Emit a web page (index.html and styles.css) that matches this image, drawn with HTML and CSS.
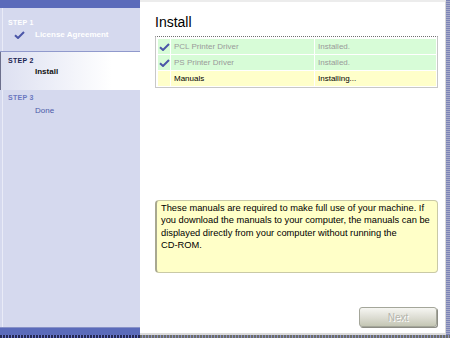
FILE: index.html
```html
<!DOCTYPE html>
<html lang="en">
<head>
  <meta charset="UTF-8">
  <title>Setup - Install</title>
  <link rel="stylesheet" href="styles.css">
</head>
<body>
  <div class="window">
    <div class="frame">
      <aside class="sidebar">
        <div class="sidebar-top"></div>

        <div class="step step-done">
          <div class="step-label">STEP 1</div>
          <div class="step-name">
            <svg class="check" width="11" height="8" viewBox="0 0 11 8"><path d="M1 4.2 L4 7 L10 1" fill="none" stroke="currentColor" stroke-width="2"/></svg>
            License Agreement
          </div>
        </div>

        <div class="step step-current">
          <div class="step-label">STEP 2</div>
          <div class="step-name">Install</div>
        </div>

        <div class="step step-next">
          <div class="step-label">STEP 3</div>
          <div class="step-name">Done</div>
        </div>

        <div class="sidebar-bottom"></div>
      </aside>

      <main class="content">
        <h1 class="title">Install</h1>

        <table class="progress">
          <tr class="row-ok">
            <td class="cell-icon"><svg class="check" width="11" height="8" viewBox="0 0 11 8"><path d="M1 4.2 L4 7 L10 1" fill="none" stroke="currentColor" stroke-width="2"/></svg></td>
            <td class="cell-name">PCL Printer Driver</td>
            <td class="cell-status">Installed.</td>
          </tr>
          <tr class="row-ok">
            <td class="cell-icon"><svg class="check" width="11" height="8" viewBox="0 0 11 8"><path d="M1 4.2 L4 7 L10 1" fill="none" stroke="currentColor" stroke-width="2"/></svg></td>
            <td class="cell-name">PS Printer Driver</td>
            <td class="cell-status">Installed.</td>
          </tr>
          <tr class="row-busy">
            <td class="cell-icon"></td>
            <td class="cell-name">Manuals</td>
            <td class="cell-status">Installing...</td>
          </tr>
        </table>

        <div class="note">
          These manuals are required to make full use of your machine. If you download the manuals to your computer, the manuals can be displayed directly from your computer without running the <span class="nowrap">CD-ROM.</span>
        </div>

        <div class="actions">
          <button class="next-btn" disabled>Next</button>
        </div>
      </main>

      <div class="edge"></div>
    </div>

    <div class="bottom-strip">
      <div class="strip-left"></div>
      <div class="strip-right"></div>
    </div>
  </div>
</body>
</html>
```

FILE: styles.css
```css
:root {
  --bar-blue: #5b6bba;
  --side-bg: #d5d9ee;
  --check: #4b56a8;
  --ok-bg: #d7fcd7;
  --busy-bg: #ffffca;
}

body {
  margin: 0;
  font-family: "Liberation Sans", Arial, sans-serif;
  background: #fff;
}

.window {
  width: 450px;
  height: 338px;
  display: flex;
  flex-direction: column;
}

.frame {
  display: flex;
  height: 335px;
}

/* left step list */
.sidebar {
  width: 140px;
  display: flex;
  flex-direction: column;
  background-color: var(--side-bg);
  background-image: linear-gradient(to right, transparent 2px, #e9ebf7 2px, #e9ebf7 3px, transparent 3px);
}

.sidebar-top {
  height: 8px;
  background: var(--bar-blue);
}

.sidebar-bottom {
  height: 7px;
  background: var(--bar-blue);
  border-top: 1px solid #8892c8;
}

.step {
  box-sizing: border-box;
}

.step-label {
  font-size: 7px;
  font-weight: bold;
  line-height: 9px;
  padding-left: 8px;
  letter-spacing: 0.3px;
}

.step-name {
  position: relative;
  font-size: 8px;
  line-height: 10px;
  padding-left: 35px;
}

.step-name .check {
  position: absolute;
  left: 14px;
  top: 1px;
}

.step-done {
  height: 44px;
  padding-top: 10px;
  border-bottom: 1px solid #9099cc;
  color: #ffffff;
}

.step-done .step-name {
  margin-top: 3px;
  font-weight: bold;
}

.step-done .check {
  color: var(--check);
}

.step-current {
  height: 38px;
  padding-top: 4px;
  background: linear-gradient(to right, #dde0f1, #ffffff 80%);
  border-left: 1px solid #6c6f8c;
}

.step-current .step-label {
  color: #1c2552;
  padding-left: 7px;
}

.step-current .step-name {
  margin-top: 2px;
  color: #111;
  font-weight: bold;
  padding-left: 34px;
}

.step-next {
  flex: 1;
  padding-top: 3px;
}

.step-next .step-label {
  color: #6a77c0;
}

.step-next .step-name {
  margin-top: 4px;
  color: #4c59a8;
}

/* right content */
.content {
  flex: 1;
  display: flex;
  flex-direction: column;
  padding: 0 7px 6px 15px;
  border-top: 2px solid #ececec;
  border-bottom: 2px solid #dcdcdc;
  border-right: 1px solid #d8d8d8;
}

.title {
  margin: 12px 0 0;
  font-size: 14px;
  font-weight: normal;
  line-height: 16px;
  color: #000;
}

.progress {
  margin-top: 6px;
  width: 283px;
  border-collapse: separate;
  border-spacing: 1px;
  padding: 1px 0 0 1px;
  border: 1px solid #c8c8c8;
  border-top: 1px dotted #707070;
  font-size: 8px;
}

.progress td {
  height: 15px;
  padding: 0 0 0 3px;
}

.cell-icon {
  width: 12px;
  padding: 0 !important;
  text-align: center;
}

.cell-icon .check {
  display: block;
  margin: 0 auto;
  color: var(--check);
}

.cell-name {
  width: 140px;
}

.row-ok td {
  background: var(--ok-bg);
  color: #9a9a9a;
}

.row-busy td {
  background: var(--busy-bg);
  color: #000;
}

.note {
  margin-top: auto;
  height: 73px;
  box-sizing: border-box;
  width: 283px;
  padding: 1px 4px 0 4px;
  background: #ffffc8;
  border: 1px solid #c9c9a6;
  border-left: 2px solid #a8a890;
  border-radius: 4px;
  font-size: 9.3px;
  line-height: 12.4px;
  color: #000;
}

.nowrap {
  white-space: nowrap;
}

.actions {
  display: flex;
  justify-content: flex-end;
  margin-top: 34px;
  padding-right: 1px;
}

.next-btn {
  width: 78px;
  height: 20px;
  border: 1px solid #a4a69a;
  border-radius: 3px;
  background: linear-gradient(to bottom, #f6f6f2, #dcdcd2 55%, #c4c6b4);
  box-shadow: 1px 1px 0 #8c8c84;
  font-family: "Liberation Sans", Arial, sans-serif;
  font-size: 10px;
  color: #b4b4ac;
  text-shadow: 1px 1px 0 #ffffff;
}

.edge {
  width: 4px;
  background: repeating-linear-gradient(to bottom, #7c84b6 0, #7c84b6 1px, #a9adca 1px, #a9adca 2px);
}

.bottom-strip {
  display: flex;
  height: 3px;
}

.strip-left {
  width: 140px;
  background: repeating-linear-gradient(to right, #252a55 0, #252a55 2px, #6f7bd0 2px, #6f7bd0 3px);
}

.strip-right {
  flex: 1;
  background: repeating-linear-gradient(to right, #6e6e66 0, #6e6e66 2px, #8c94c8 2px, #8c94c8 3px);
}
```
